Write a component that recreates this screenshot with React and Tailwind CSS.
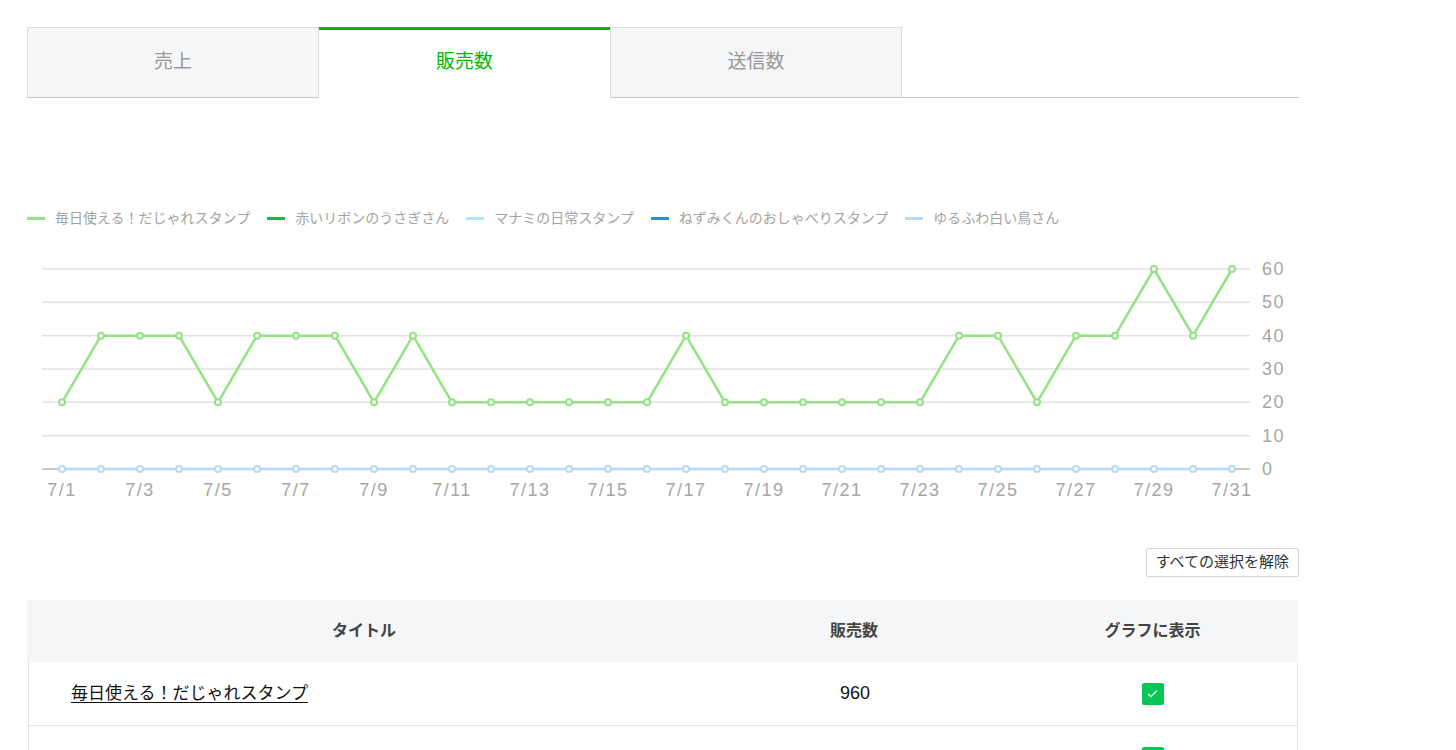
import { useState } from "react"

const sales = [20,40,40,40,20,40,40,40,20,40,20,20,20,20,20,20,40,20,20,20,20,20,20,40,40,20,40,40,60,40,60]

const legend = [
    { name: "毎日使える！だじゃれスタンプ", color: "#93e384" },
    { name: "赤いリボンのうさぎさん", color: "#06c244" },
    { name: "マナミの日常スタンプ", color: "#a8ecf1" },
    { name: "ねずみくんのおしゃべりスタンプ", color: "#2f8fcc" },
    { name: "ゆるふわ白い鳥さん", color: "#b6d9fa" },
]

const px = (i) => 62 + i * 39
const py = (v) => 469 - v * (200 / 60)

function Check() {
    return (
        <span className="inline-flex items-center justify-center w-[22px] h-[22px] bg-[#06c755] rounded-[2px]">
            <svg viewBox="0 0 24 24" className="w-[15px] h-[15px]" fill="none" stroke="white" strokeWidth={2}>
                <path d="M5 12.5l4.5 4.5L19 7.5" />
            </svg>
        </span>
    )
}

function Chart() {
    const greenPts = sales.map((v, i) => `${px(i)},${py(v)}`).join(" ")
    const zeroPts = sales.map((v, i) => `${px(i)},${py(0)}`).join(" ")
    return (
        <svg viewBox="27 250 1272 260" width="1272" height="260" className="block">
            {[10,20,30,40,50,60].map(v => (
                <line key={v} x1="42" x2="1250" y1={py(v)} y2={py(v)} stroke="#e2e2e2" strokeWidth="1.5" />
            ))}
            <line x1="42" x2="1250" y1={py(0)} y2={py(0)} stroke="#b5b5b5" strokeWidth="1.5" />
            {[0,10,20,30,40,50,60].map(v => (
                <text key={v} x="1262" y={py(v)} dy="6" fontSize="18" letterSpacing="1.5" fill="#a6a6a6" fontFamily="Liberation Sans, sans-serif">{v}</text>
            ))}
            {sales.map((_, i) => i % 2 === 0 && (
                <text key={i} x={px(i)} y="496" textAnchor="middle" fontSize="18" letterSpacing="1.5" fill="#a6a6a6" fontFamily="Liberation Sans, sans-serif">7/{i + 1}</text>
            ))}
            <polyline points={zeroPts} fill="none" stroke="#b6d9fa" strokeWidth="2.5" />
            {sales.map((_, i) => (
                <circle key={i} cx={px(i)} cy={py(0)} r="3" fill="white" stroke="#b6d9fa" strokeWidth="2" />
            ))}
            <polyline points={greenPts} fill="none" stroke="#93e384" strokeWidth="2.5" strokeLinejoin="round" />
            {sales.map((v, i) => (
                <circle key={i} cx={px(i)} cy={py(v)} r="3" fill="white" stroke="#93e384" strokeWidth="2" />
            ))}
        </svg>
    )
}

export default function App() {
    const [tab, setTab] = useState(1)
    const tabs = ["売上", "販売数", "送信数"]

    return (
        <div className="h-[750px] overflow-hidden bg-white font-['Liberation_Sans','Noto_Sans_CJK_JP',sans-serif]">
            <div className="w-[1272px] ml-[27px] pt-[27px]">
                <div className="flex h-[71px]">
                    {tabs.map((t, i) => (
                        <button
                            key={t}
                            onClick={() => setTab(i)}
                            className={i === tab
                                ? "w-[291px] bg-white border-t-[3px] border-[#00b900] text-[#00b900] text-[19px]"
                                : "w-[292px] bg-[#f5f6f8] border border-[#dcdcdc] text-[#999] text-[19px] border-b-[#c8c8c8]"}
                        >
                            <span className={i === tab ? "relative -top-[2px]" : ""}>{t}</span>
                        </button>
                    ))}
                    <div className="flex-1 border-b border-[#c8c8c8]" />
                </div>

                <div className="flex items-center mt-[111px] h-[18px] text-[14px] text-[#a3a3a3]">
                    {legend.map((l, i) => (
                        <div key={i} className="flex items-center mr-[17px]">
                            <span className="w-[18px] h-[3px] mr-[10px]" style={{ backgroundColor: l.color }} />
                            <span>{l.name}</span>
                        </div>
                    ))}
                </div>

                <div className="mt-[23px]">
                    <Chart />
                </div>

                <div className="flex justify-end mt-[38px]">
                    <button className="h-[29px] px-[9px] border border-[#d6d6d6] rounded-[2px] text-[15px] text-[#333] bg-white">
                        すべての選択を解除
                    </button>
                </div>

                <div className="mt-[23px] w-[1271px]">
                    <div className="flex h-[62px] items-center bg-[#f5f6f8] text-[16px] font-bold text-[#444]">
                        <div className="w-[674px] text-center">タイトル</div>
                        <div className="w-[306px] text-center">販売数</div>
                        <div className="flex-1 text-center">グラフに表示</div>
                    </div>
                    <div className="border-l border-r border-[#e5e5e5] ml-[1px]">
                        <div className="flex h-[64px] items-center border-b border-[#e5e5e5] text-[17px] text-[#111]">
                            <div className="w-[673px] pl-[42px]">
                                <a href="#" className="underline underline-offset-[3px]">毎日使える！だじゃれスタンプ</a>
                            </div>
                            <div className="w-[306px] text-center text-[18px]">960</div>
                            <div className="flex-1 flex justify-center">
                                <Check />
                            </div>
                        </div>
                        <div className="flex h-[64px] items-center">
                            <div className="w-[673px]" />
                            <div className="w-[306px]" />
                            <div className="flex-1 flex justify-center">
                                <Check />
                            </div>
                        </div>
                    </div>
                </div>
            </div>
        </div>
    )
}
